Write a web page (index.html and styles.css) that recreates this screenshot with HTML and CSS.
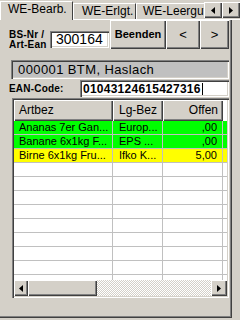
FILE: index.html
```html
<!DOCTYPE html>
<html lang="de">
<head>
	<meta charset="UTF-8">
	<title>WE-Bearbeitung</title>
	<link rel="stylesheet" href="styles.css">
</head>
<body>
<div class="screen">
	<div class="tabbar">
		<div class="tabs">
			<div class="tab tab-active">WE-Bearb.</div>
			<div class="tab tab-two">WE-Erlgt.</div>
			<div class="tab tab-three">WE-Leergut</div>
		</div>
		<div class="spin raised"><svg width="4" height="7" viewBox="0 0 4 7"><polygon points="4,0 4,7 0,3.5" fill="#000"/></svg></div>
		<div class="spin raised"><svg width="4" height="7" viewBox="0 0 4 7"><polygon points="0,0 0,7 4,3.5" fill="#000"/></svg></div>
	</div>
	<div class="page">
		<div class="row-top">
			<div class="lbl-stack">BS-Nr /<br>Art-Ean</div>
			<div class="field field-bs">300164</div>
			<div class="btn raised btn-end">Beenden</div>
			<div class="btn raised btn-prev">&lt;</div>
			<div class="btn raised btn-next">&gt;</div>
		</div>
		<div class="store">000001 BTM, Haslach</div>
		<div class="row-ean">
			<span class="lbl">EAN-Code:</span>
			<div class="field field-ean">01043124615427316<span class="caret"></span></div>
		</div>
		<div class="list">
			<div class="list-head">
				<div class="hcell c1">Artbez</div>
				<div class="hcell c2">Lg-Bez</div>
				<div class="hcell c3">Offen</div>
				<div class="hfill"></div>
			</div>
			<div class="list-body">
				<div class="lrow green"><span class="cell c1">Ananas 7er Gan...</span><span class="cell c2">Europ...</span><span class="cell c3">,00</span><span class="cell c4"></span></div>
				<div class="lrow green"><span class="cell c1">Banane 6x1kg F...</span><span class="cell c2">EPS ...</span><span class="cell c3">,00</span><span class="cell c4"></span></div>
				<div class="lrow yellow"><span class="cell c1">Birne 6x1kg Fru...</span><span class="cell c2">Ifko K...</span><span class="cell c3">5,00</span><span class="cell c4"></span></div>
				<div class="lrow"><span class="cell c1"></span><span class="cell c2"></span><span class="cell c3"></span><span class="cell c4"></span></div>
				<div class="lrow"><span class="cell c1"></span><span class="cell c2"></span><span class="cell c3"></span><span class="cell c4"></span></div>
				<div class="lrow"><span class="cell c1"></span><span class="cell c2"></span><span class="cell c3"></span><span class="cell c4"></span></div>
				<div class="lrow"><span class="cell c1"></span><span class="cell c2"></span><span class="cell c3"></span><span class="cell c4"></span></div>
				<div class="lrow"><span class="cell c1"></span><span class="cell c2"></span><span class="cell c3"></span><span class="cell c4"></span></div>
				<div class="lrow"><span class="cell c1"></span><span class="cell c2"></span><span class="cell c3"></span><span class="cell c4"></span></div>
				<div class="lrow"><span class="cell c1"></span><span class="cell c2"></span><span class="cell c3"></span><span class="cell c4"></span></div>
				<div class="lrow"><span class="cell c1"></span><span class="cell c2"></span><span class="cell c3"></span><span class="cell c4"></span></div>
				<div class="lrow"><span class="cell c1"></span><span class="cell c2"></span><span class="cell c3"></span><span class="cell c4"></span></div>
			</div>
			<div class="hscroll">
				<div class="sbtn sbtn-l raised"><svg width="4" height="7" viewBox="0 0 4 7"><polygon points="4,0 4,7 0,3.5" fill="#000"/></svg></div>
				<div class="thumb raised"></div>
				<div class="track"></div>
				<div class="sbtn sbtn-r raised"><svg width="4" height="7" viewBox="0 0 4 7"><polygon points="0,0 0,7 4,3.5" fill="#000"/></svg></div>
			</div>
		</div>
	</div>
</div>
</body>
</html>
```

FILE: styles.css
```css
body {
	margin: 0;
	background: #d4d0c8;
	font-family: "Liberation Sans", Arial, sans-serif;
	color: #000;
}
.screen {
	width: 240px;
	height: 320px;
	overflow: hidden;
	background: #d4d0c8;
}
.raised {
	background: #d4d0c8;
	box-shadow: inset 1px 1px #fff, inset -1px -1px #404040, inset -2px -2px #808080;
}

/* tab strip */
.tabbar {
	display: flex;
	height: 20px;
	box-shadow: inset 0 -1px #fff;
}
.tabs {
	display: flex;
	flex: 1;
	min-width: 0;
	overflow: hidden;
}
.tab {
	flex: none;
	box-sizing: border-box;
	height: 16px;
	margin-top: 3px;
	padding-left: 7px;
	border-top: 1px solid #fff;
	border-left: 1px solid #fff;
	border-right: 1px solid #404040;
	font-size: 12px;
	line-height: 14px;
	white-space: nowrap;
	background: #d4d0c8;
}
.tab-active {
	width: 73px;
	height: 19px;
	margin-top: 1px;
	line-height: 15px;
}
.tab-two {
	width: 63px;
	padding-left: 8px;
}
.tab-three {
	padding-left: 6px;
	padding-right: 6px;
}
.spin {
	flex: none;
	display: flex;
	align-items: center;
	justify-content: center;
	width: 18px;
	height: 16px;
	margin-top: 2px;
}

/* page */
.page {
	box-sizing: border-box;
	width: 232px;
	height: 298px;
	border-right: 1px solid #404040;
	border-bottom: 1px solid #404040;
	box-shadow: inset -1px -1px #808080;
}
.row-top {
	display: flex;
	height: 29px;
}
.lbl-stack {
	box-sizing: border-box;
	width: 41px;
	margin-left: 9px;
	padding-top: 10px;
	font-size: 10px;
	font-weight: bold;
	line-height: 10px;
	letter-spacing: 0.2px;
}
.field {
	box-sizing: border-box;
	background: #fff;
	box-shadow: inset 1px 1px #808080, inset 2px 2px #404040, inset -1px -1px #fff, inset -2px -2px #d4d0c8;
	white-space: nowrap;
	overflow: hidden;
}
.field-bs {
	width: 59px;
	height: 17px;
	margin-top: 11px;
	padding-left: 6px;
	font-size: 14px;
	line-height: 17px;
}
.btn {
	display: flex;
	align-items: center;
	justify-content: center;
	box-sizing: border-box;
	height: 29px;
	padding-bottom: 1px;
}
.btn-end {
	width: 56px;
	margin-left: 1px;
	font-size: 11px;
	font-weight: bold;
}
.btn-prev {
	width: 34px;
	font-size: 13px;
}
.btn-next {
	width: 29px;
	font-size: 13px;
}
.store {
	box-sizing: border-box;
	width: 218px;
	height: 19px;
	margin: 11px 0 0 11px;
	padding: 3px 0 0 7px;
	font-size: 13px;
	line-height: 14px;
	letter-spacing: 0.4px;
	background: #c0c0c0;
	box-shadow: inset 1px 1px #808080, inset 2px 2px #404040, inset -1px -1px #fff, inset -2px -2px #d4d0c8;
}
.row-ean {
	display: flex;
	align-items: center;
	height: 17px;
	margin-top: 1px;
}
.lbl {
	width: 71px;
	margin-left: 9px;
	font-size: 10px;
	font-weight: bold;
	letter-spacing: 0.2px;
}
.field-ean {
	display: flex;
	align-items: center;
	width: 149px;
	height: 17px;
	padding-left: 3px;
	font-size: 12px;
	font-weight: bold;
	letter-spacing: 0.25px;
}
.caret {
	width: 1px;
	height: 12px;
	margin-left: 1px;
	background: #000;
}

/* list view */
.list {
	display: flex;
	flex-direction: column;
	box-sizing: border-box;
	width: 217px;
	height: 200px;
	margin: 1px 0 0 12px;
	padding: 2px;
	background: #fff;
	box-shadow: inset 1px 1px #808080, inset 2px 2px #404040, inset -1px -1px #fff, inset -2px -2px #d4d0c8;
}
.list-head {
	display: flex;
	flex: none;
	height: 21px;
}
.hcell {
	box-sizing: border-box;
	padding-top: 3px;
	font-size: 12px;
	line-height: 14px;
	background: #d4d0c8;
	box-shadow: inset 1px 1px #fff, inset -1px -1px #404040, inset -2px -2px #808080;
}
.hcell.c1 { padding-left: 5px; }
.hcell.c2 { padding-left: 6px; }
.hcell.c3 { padding-right: 5px; text-align: right; }
.hfill {
	flex: 1;
	background: #fff;
}
.c1 { width: 99px; }
.c2 { width: 50px; }
.c3 { width: 60px; }
.c4 { flex: 1; }
.list-body {
	flex: 1;
	min-height: 0;
	overflow: hidden;
}
.lrow {
	display: flex;
	height: 14px;
	font-size: 11px;
	line-height: 13px;
}
.cell {
	box-sizing: border-box;
	border-right: 1px solid #c0c0c0;
	border-bottom: 1px solid #c0c0c0;
	white-space: nowrap;
	overflow: hidden;
}
.cell.c1 { padding-left: 5px; }
.cell.c2 { padding-left: 6px; }
.cell.c3 { padding-right: 5px; text-align: right; }
.cell.c4 { border-right: none; }
.green { background: #00ff00; }
.yellow { background: #ffff00; }

.hscroll {
	display: flex;
	flex: none;
	height: 16px;
}
.sbtn {
	display: flex;
	align-items: center;
	justify-content: center;
}
.sbtn-l { width: 14px; }
.sbtn-r { width: 16px; }
.thumb { width: 69px; }
.track {
	flex: 1;
	background: repeating-conic-gradient(#fff 0 25%, #d4d0c8 0 50%) 0 0 / 2px 2px;
}
```
